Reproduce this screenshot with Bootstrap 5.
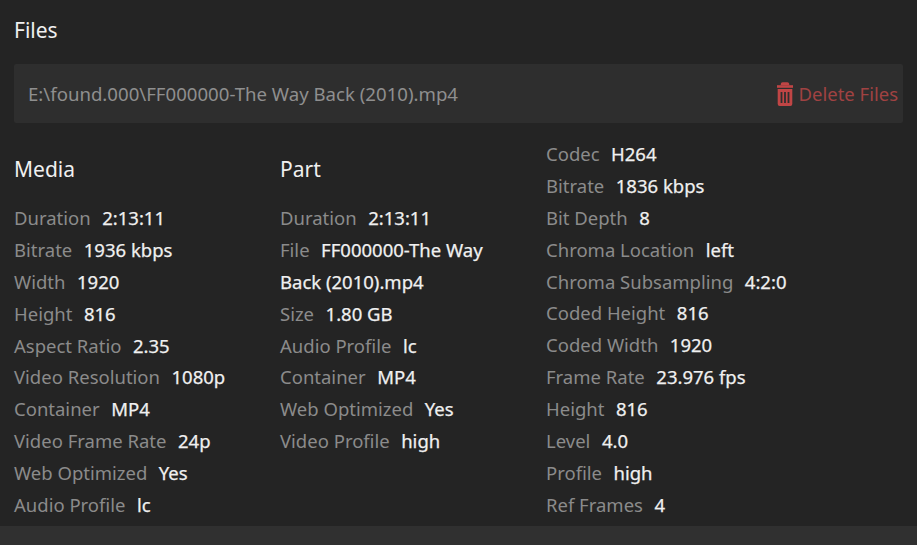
<!DOCTYPE html>
<html lang="en"><head><meta charset="utf-8"><title>Files</title>
<link href="https://cdn.jsdelivr.net/npm/bootstrap@5.3.0/dist/css/bootstrap.min.css" rel="stylesheet">
<style>
html,body{height:545px;overflow:hidden}
body{background:#303030;font-family:"Noto Sans",sans-serif;color:#fff;font-size:18.5px}
.sheet{background:#242424;height:526px;padding:0 14px;overflow:hidden}
.ttl{font-size:21px;font-weight:400;line-height:32px;margin:0;color:#f0f0f0}
.files-ttl{padding-top:14px;height:64px;box-sizing:border-box}
.pathbar{background:#2e2e2e;height:59px;border-radius:2px;padding:0 5px 0 14px;color:#8f8f8f}
.pathtxt{font-size:18.63px}
.del{color:#a04242;margin-top:1px}
.cols{display:grid;grid-template-columns:266px 266px 1fr;margin-top:14px}
.cols1{padding-top:16px}
.cols2{padding-top:1px}
.ttl-m{height:49px;line-height:33px;margin-top:0}
.pr{line-height:31.900px;height:31.900px;white-space:nowrap}
.pr.wrap{height:63.800px;white-space:normal;width:230px}
.k{color:#8b8b8b;margin-right:11.500px}
.v{color:#f0f0f0;-webkit-text-stroke:.25px #f0f0f0}
</style></head><body>
<div class="sheet">
<h3 class="ttl files-ttl">Files</h3>
<div class="pathbar d-flex align-items-center justify-content-between">
<span class="pathtxt">E:\found.000\FF000000-The Way Back (2010).mp4</span>
<span class="del d-flex align-items-center gap-1"><svg width="18" height="24" viewBox="0 0 18 24" fill="#c04545"><path d="M5.500 3.200V2.200A1.200 1.200 0 0 1 6.700 1h4.600a1.200 1.200 0 0 1 1.200 1.200v1M7 3.200V2.500h4v.7" fill="none" stroke="#c04545" stroke-width="1.500"/><path d="M1 3.200h16v2.600H1z"/><path fill-rule="evenodd" d="M1.700 7h14.600v15a2 2 0 0 1-2 2H3.700a2 2 0 0 1-2-2zM4.600 10v11h1.800V10zM8.100 10v11h1.800V10zM11.600 10v11h1.800V10z"/></svg>Delete Files</span>
</div>
<div class="cols">
<div class="cols1">
<h3 class="ttl ttl-m">Media</h3>
<div class="pr"><span class="k">Duration</span><span class="v">2:13:11</span></div>
<div class="pr"><span class="k">Bitrate</span><span class="v">1936 kbps</span></div>
<div class="pr"><span class="k">Width</span><span class="v">1920</span></div>
<div class="pr"><span class="k">Height</span><span class="v">816</span></div>
<div class="pr"><span class="k">Aspect Ratio</span><span class="v">2.35</span></div>
<div class="pr"><span class="k">Video Resolution</span><span class="v">1080p</span></div>
<div class="pr"><span class="k">Container</span><span class="v">MP4</span></div>
<div class="pr"><span class="k">Video Frame Rate</span><span class="v">24p</span></div>
<div class="pr"><span class="k">Web Optimized</span><span class="v">Yes</span></div>
<div class="pr"><span class="k">Audio Profile</span><span class="v">lc</span></div>
</div>
<div class="cols1">
<h3 class="ttl ttl-m">Part</h3>
<div class="pr"><span class="k">Duration</span><span class="v">2:13:11</span></div>
<div class="pr wrap"><span class="k">File</span><span class="v">FF000000-The Way Back (2010).mp4</span></div>
<div class="pr"><span class="k">Size</span><span class="v">1.80 GB</span></div>
<div class="pr"><span class="k">Audio Profile</span><span class="v">lc</span></div>
<div class="pr"><span class="k">Container</span><span class="v">MP4</span></div>
<div class="pr"><span class="k">Web Optimized</span><span class="v">Yes</span></div>
<div class="pr"><span class="k">Video Profile</span><span class="v">high</span></div>
</div>
<div class="cols2">
<div class="pr"><span class="k">Codec</span><span class="v">H264</span></div>
<div class="pr"><span class="k">Bitrate</span><span class="v">1836 kbps</span></div>
<div class="pr"><span class="k">Bit Depth</span><span class="v">8</span></div>
<div class="pr"><span class="k">Chroma Location</span><span class="v">left</span></div>
<div class="pr"><span class="k">Chroma Subsampling</span><span class="v">4:2:0</span></div>
<div class="pr"><span class="k">Coded Height</span><span class="v">816</span></div>
<div class="pr"><span class="k">Coded Width</span><span class="v">1920</span></div>
<div class="pr"><span class="k">Frame Rate</span><span class="v">23.976 fps</span></div>
<div class="pr"><span class="k">Height</span><span class="v">816</span></div>
<div class="pr"><span class="k">Level</span><span class="v">4.0</span></div>
<div class="pr"><span class="k">Profile</span><span class="v">high</span></div>
<div class="pr"><span class="k">Ref Frames</span><span class="v">4</span></div>
</div>
</div>
</div>
<script src="https://cdn.jsdelivr.net/npm/bootstrap@5.3.0/dist/js/bootstrap.bundle.min.js"></script>
</body></html>
